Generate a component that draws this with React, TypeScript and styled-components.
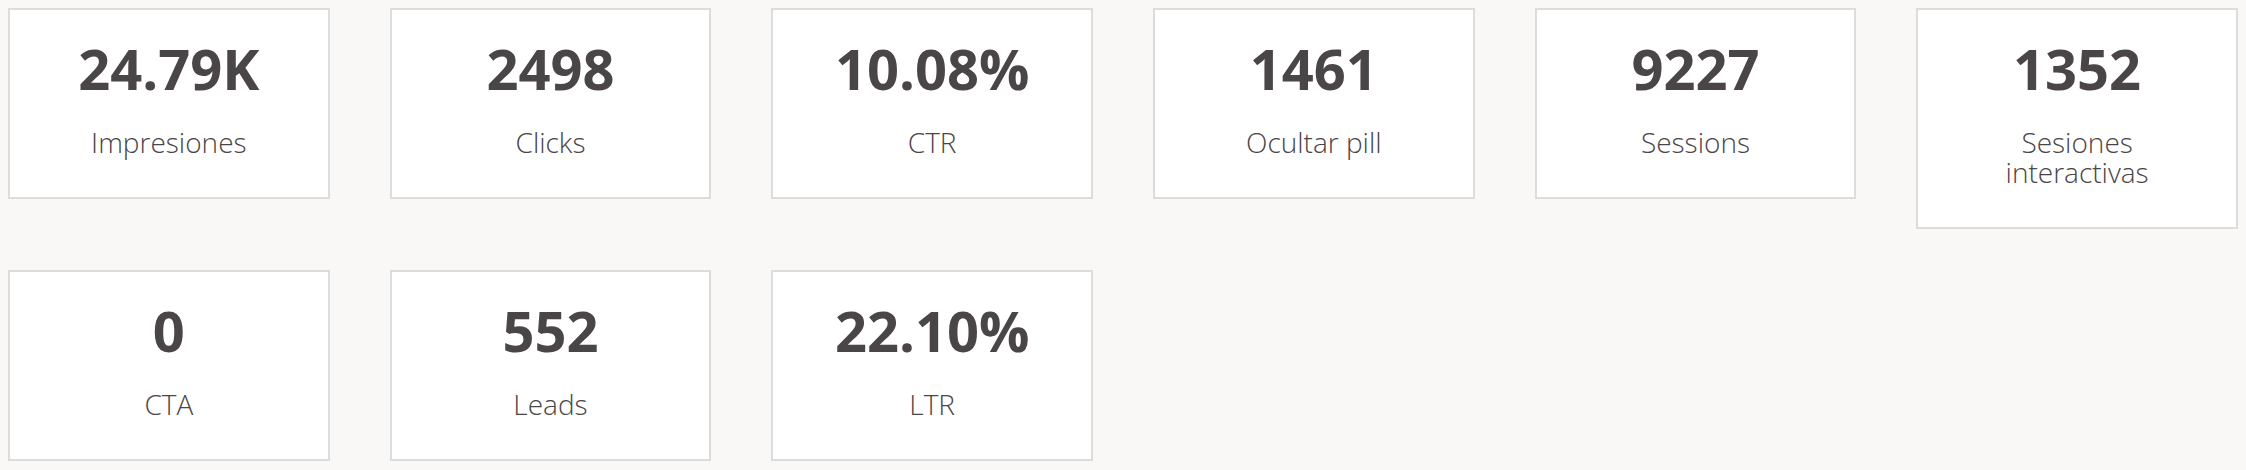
import React from "react";
import styled, { createGlobalStyle } from "styled-components";

const Global = createGlobalStyle`
  html, body {
    margin: 0;
    padding: 0;
    background: #f9f8f6;
  }
  body {
    padding: 8px;
    font-family: "Open Sans", "Noto Sans", sans-serif;
    color: #4a4546;
  }
`;

const Grid = styled.div`
  display: flex;
  flex-wrap: wrap;
  align-items: flex-start;
  gap: 41px 60px;
`;

const Card = styled.div`
  box-sizing: border-box;
  flex: 0 0 calc((100% - 300px) / 6);
  background: #ffffff;
  border: 2px solid #dddcdc;
  padding: 20px 10px 40px;
  text-align: center;
`;

const Value = styled.div`
  font-size: 56px;
  font-weight: 700;
  line-height: 76px;
  color: #4a4546;
`;

const Label = styled.div`
  margin-top: 21px;
  font-size: 28px;
  font-weight: 300;
  line-height: 30px;
  color: #4a4546;
`;

const metrics: { value: string; label: React.ReactNode }[] = [
  { value: "24.79K", label: "Impresiones" },
  { value: "2498", label: "Clicks" },
  { value: "10.08%", label: "CTR" },
  { value: "1461", label: "Ocultar pill" },
  { value: "9227", label: "Sessions" },
  {
    value: "1352",
    label: (
      <>
        Sesiones
        <br />
        interactivas
      </>
    ),
  },
  { value: "0", label: "CTA" },
  { value: "552", label: "Leads" },
  { value: "22.10%", label: "LTR" },
];

export default function App() {
  return (
    <>
      <Global />
      <Grid>
        {metrics.map((m, i) => (
          <Card key={i}>
            <Value>{m.value}</Value>
            <Label>{m.label}</Label>
          </Card>
        ))}
      </Grid>
    </>
  );
}
